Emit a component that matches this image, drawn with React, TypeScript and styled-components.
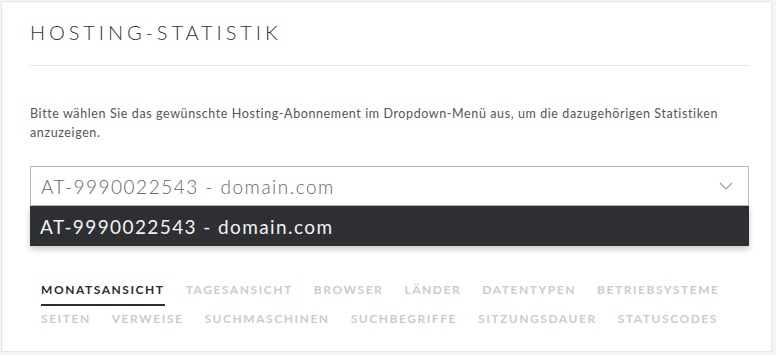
import styled, { createGlobalStyle } from "styled-components";

const GlobalStyle = createGlobalStyle`
  body {
    margin: 0;
    background: #f4f4f4;
    font-family: "Lato", "Liberation Sans", sans-serif;
  }
`;

const Page = styled.div`
  padding: 1px 4px 1px 1px;
`;

const Card = styled.section`
  background: #fff;
  border: 1px solid #e6e6e6;
  padding: 17px 22px 15px 28px;
  height: 351px;
  box-sizing: border-box;
`;

const Title = styled.h1`
  margin: 0;
  font-size: 20px;
  font-weight: 300;
  letter-spacing: 3.9px;
  color: #2f3137;
  line-height: 26px;
  padding-bottom: 20px;
  border-bottom: 1px solid #e4e4e4;
`;

const Description = styled.p`
  margin: 38px 0 0;
  font-size: 12.5px;
  letter-spacing: 0.6px;
  line-height: 19px;
  color: #555;
`;

const SelectWrap = styled.div`
  position: relative;
  margin-top: 24px;
`;

const SelectBox = styled.div`
  display: flex;
  align-items: center;
  justify-content: space-between;
  height: 38px;
  border: 1px solid #b9b9b9;
  padding: 0 15px 0 10px;
  font-size: 19px;
  font-weight: 300;
  color: #666;
  letter-spacing: 1.5px;
`;

const Options = styled.ul`
  list-style: none;
  margin: 0;
  padding: 0;
  box-shadow: 0 3px 6px rgba(0, 0, 0, 0.22);
`;

const Option = styled.li`
  height: 40px;
  display: flex;
  align-items: center;
  padding: 0 10px;
  background: #2e2f32;
  color: #f2f2f2;
  font-size: 19px;
  letter-spacing: 1.4px;
`;

const Tabs = styled.nav`
  display: flex;
  flex-wrap: wrap;
  column-gap: 21px;
  row-gap: 2px;
  margin-top: 33px;
  padding-left: 11px;
  max-width: 700px;
`;

const Tab = styled.span<{ $active?: boolean }>`
  font-size: 12px;
  font-weight: 700;
  letter-spacing: 1.55px;
  line-height: 14px;
  padding: 4px 0 7px;
  color: ${(p) => (p.$active ? "#2c2d33" : "#c9cbd1")};
  border-bottom: 2px solid ${(p) => (p.$active ? "#2c2d33" : "transparent")};
  cursor: pointer;
`;

const tabs = [
  "Monatsansicht",
  "Tagesansicht",
  "Browser",
  "Länder",
  "Datentypen",
  "Betriebsysteme",
  "Seiten",
  "Verweise",
  "Suchmaschinen",
  "Suchbegriffe",
  "Sitzungsdauer",
  "Statuscodes",
];

const Chevron = () => (
  <svg width="14" height="8" viewBox="0 0 14 8" fill="none">
    <path d="M1 1l6 6 6-6" stroke="#999" strokeWidth="1.2" />
  </svg>
);

export default function App() {
  return (
    <Page>
      <GlobalStyle />
      <Card>
        <Title>HOSTING-STATISTIK</Title>
        <Description>
          Bitte wählen Sie das gewünschte Hosting-Abonnement im Dropdown-Menü aus, um die
          dazugehörigen Statistiken anzuzeigen.
        </Description>
        <SelectWrap>
          <SelectBox>
            <span>AT-9990022543 - domain.com</span>
            <Chevron />
          </SelectBox>
          <Options>
            <Option>AT-9990022543 - domain.com</Option>
          </Options>
        </SelectWrap>
        <Tabs>
          {tabs.map((t, i) => (
            <Tab key={t} $active={i === 0}>
              {t.toUpperCase()}
            </Tab>
          ))}
        </Tabs>
      </Card>
    </Page>
  );
}
